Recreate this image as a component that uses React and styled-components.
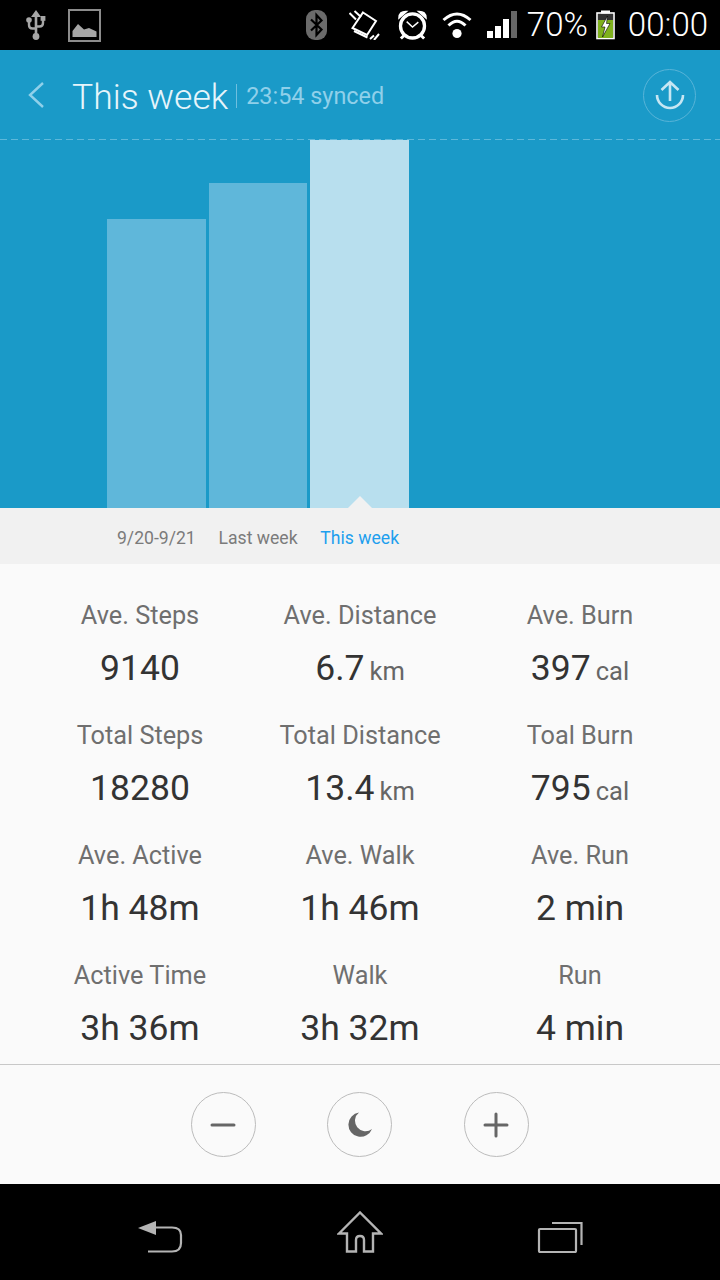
import React from "react";
import styled, { createGlobalStyle } from "styled-components";

const Global = createGlobalStyle`
  html, body { margin: 0; padding: 0; background: #000; }
  body { font-family: Roboto, "Liberation Sans", sans-serif; }
  * { box-sizing: border-box; }
`;

const STATS = [
  ["Ave. Steps", "9140"],
  ["Ave. Distance", "6.7", "km"],
  ["Ave. Burn", "397", "cal"],
  ["Total Steps", "18280"],
  ["Total Distance", "13.4", "km"],
  ["Toal Burn", "795", "cal"],
  ["Ave. Active", "1h 48m"],
  ["Ave. Walk", "1h 46m"],
  ["Ave. Run", "2 min"],
  ["Active Time", "3h 36m"],
  ["Walk", "3h 32m"],
  ["Run", "4 min"],
];

const BARS = [
  { h: 289, label: "9/20-9/21" },
  { h: 325, label: "Last week" },
  { h: 368, label: "This week", active: true },
];

function UsbIcon() {
  return (
    <svg width="20" height="34" viewBox="0 0 20 34" fill="none">
      <path d="M10 2 L15 9 H11.3 V27 H8.7 V9 H5 Z" fill="#a6a6a6" />
      <path d="M3 13 V17 Q3 20.5 6.5 20.5 H10 M17 11 V15 Q17 18.5 13.5 18.5 H10" stroke="#a6a6a6" strokeWidth="2.4" />
      <circle cx="3" cy="12" r="2.8" fill="#a6a6a6" />
      <rect x="14.6" y="8" width="4.8" height="4.8" fill="#a6a6a6" />
      <circle cx="10" cy="28.5" r="3.4" fill="#a6a6a6" />
    </svg>
  );
}

function PictureIcon() {
  return (
    <svg width="33" height="33" viewBox="0 0 33 33" fill="none">
      <rect x="1" y="1" width="31" height="31" stroke="#8c8c8c" strokeWidth="2" />
      <path d="M4.5 28 V22 L10 15 L16 20.5 L21 19 L28.5 22.5 V28 Z" fill="#a6a6a6" />
    </svg>
  );
}

function BluetoothIcon() {
  return (
    <svg width="21" height="30" viewBox="0 0 21 30" fill="none">
      <rect width="21" height="30" rx="9" fill="#6b6b6b" />
      <path d="M5 9.5 L15.5 19.5 L10.5 25 V5 L15.5 10.5 L5 20.5" stroke="#000" strokeWidth="2.2" />
    </svg>
  );
}

function VibrateIcon() {
  return (
    <svg width="31" height="30" viewBox="0 0 31 30" fill="none" stroke="#fff">
      <path d="M14 2.5 L27 11 L18 25 L3.5 18 Z" strokeWidth="2" />
      <path d="M5 21 L18.5 27.5" strokeWidth="2" />
      <path d="M0.5 3 L7 9.5 M5.5 1 L12 7 M21 29 L25 25.5 M25 30 L30 24" strokeWidth="2" />
    </svg>
  );
}

function AlarmIcon() {
  return (
    <svg width="31" height="32" viewBox="0 0 32 32" fill="none" stroke="#fff">
      <circle cx="16" cy="17" r="12.4" strokeWidth="3.4" />
      <path d="M2 9 Q2 1.5 10 2 Z M30 9 Q30 1.5 22 2 Z" fill="#fff" strokeWidth="1.5" />
      <path d="M10 12.5 L16 18 L22 13" strokeWidth="1.5" />
      <path d="M4 30 L7 27 M28 30 L25 27" strokeWidth="3" />
    </svg>
  );
}

function WifiIcon() {
  return (
    <svg width="30" height="30" viewBox="0 0 30 30" fill="none" stroke="#fff" strokeWidth="3">
      <path d="M1.5 10 Q15 -2 28.5 10" />
      <path d="M6.5 15.5 Q15 7 23.5 15.5" />
      <circle cx="15" cy="23.5" r="4.6" fill="#fff" stroke="none" />
    </svg>
  );
}

function SignalIcon() {
  return (
    <svg width="30" height="28" viewBox="0 0 30 28">
      <rect x="0" y="20" width="6" height="7" fill="#fff" />
      <rect x="8" y="15" width="6" height="12" fill="#fff" />
      <rect x="16" y="8" width="6" height="19" fill="#fff" />
      <rect x="24" y="0" width="6" height="27" fill="#666" />
    </svg>
  );
}

function BatteryIcon() {
  return (
    <svg width="19" height="30" viewBox="0 0 19 30" fill="none">
      <rect x="5" y="0.5" width="9" height="3" fill="#fff" />
      <rect x="1" y="3" width="17" height="25.5" stroke="#fff" strokeWidth="1.6" />
      <rect x="2" y="4" width="15" height="6" fill="#333" />
      <rect x="2" y="10" width="15" height="18" fill="#7fb11d" />
      <path d="M11.5 6 L5.5 17 H9 L6.5 27 L14 13.5 H10.5 Z" fill="#fff" stroke="#000" strokeWidth="0.6" />
    </svg>
  );
}

function BackArrow() {
  return (
    <svg width="18" height="28" viewBox="0 0 18 28" fill="none">
      <path d="M16 2 L3 14 L16 26" stroke="#8fd0ea" strokeWidth="2.4" />
    </svg>
  );
}

function UploadIcon() {
  return (
    <svg width="30" height="32" viewBox="0 0 30 32" fill="none" stroke="#c6e6f3" strokeWidth="2.6">
      <path d="M15 22 V3 M6.5 11 L15 3 L23.5 11" />
      <path d="M2 16 A13 13 0 0 0 28 16" />
    </svg>
  );
}

function MinusIcon() {
  return (
    <svg width="26" height="26" viewBox="0 0 26 26" stroke="#666" strokeWidth="3" strokeLinecap="round">
      <path d="M2 13 H24" />
    </svg>
  );
}

function PlusIcon() {
  return (
    <svg width="26" height="26" viewBox="0 0 26 26" stroke="#666" strokeWidth="3" strokeLinecap="round">
      <path d="M2 13 H24 M13 2 V24" />
    </svg>
  );
}

function MoonIcon() {
  return (
    <svg width="26" height="26" viewBox="0 0 26 26">
      <path d="M12 0.5 A12.2 12.2 0 1 0 25 17 A9.5 9.5 0 0 1 12 0.5 Z" fill="#666" />
    </svg>
  );
}

function NavBack() {
  return (
    <svg width="46" height="32" viewBox="0 0 46 32" fill="none">
      <path d="M1 7 L19 0 V14 Z" fill="#b4b4b4" />
      <path d="M18 6.5 H35 Q44 6.5 44 14 V22 Q44 30.5 35 30.5 H11" stroke="#b4b4b4" strokeWidth="2.2" />
    </svg>
  );
}

function NavHome() {
  return (
    <svg width="46" height="42" viewBox="0 0 46 42" fill="none" stroke="#b4b4b4" strokeWidth="2.4">
      <path d="M2 22.5 L23 1.5 L44 22.5 H36 V40.5 H27 V29 Q27 25 23 25 Q19 25 19 29 V40.5 H10 V22.5 Z" />
    </svg>
  );
}

function NavRecent() {
  return (
    <svg width="46" height="31" viewBox="0 0 46 31" fill="none" stroke="#b4b4b4" strokeWidth="2.2">
      <rect x="2" y="7" width="37" height="23" rx="1" />
      <path d="M15 1 H44.5 V23" />
    </svg>
  );
}

export default function App() {
  return (
    <Screen>
      <Global />
      <StatusBar>
        <StatusGroup>
          <StatusSlot $gap={22}><UsbIcon /></StatusSlot>
          <PictureIcon />
        </StatusGroup>
        <StatusGroup>
          <StatusSlot $gap={22}><BluetoothIcon /></StatusSlot>
          <StatusSlot $gap={17}><VibrateIcon /></StatusSlot>
          <StatusSlot $gap={14}><AlarmIcon /></StatusSlot>
          <StatusSlot $gap={15}><WifiIcon /></StatusSlot>
          <StatusSlot $gap={10}><SignalIcon /></StatusSlot>
          <StatusText>70%</StatusText>
          <StatusSlot $gap={13} $left={8}><BatteryIcon /></StatusSlot>
          <StatusText>00:00</StatusText>
        </StatusGroup>
      </StatusBar>

      <Header>
        <BackSlot><BackArrow /></BackSlot>
        <Title>This week</Title>
        <Synced>23:54 synced</Synced>
        <UploadButton><UploadIcon /></UploadButton>
      </Header>

      <Chart>
        {BARS.map((b) => (
          <Bar key={b.label} $h={b.h} $active={b.active} />
        ))}
      </Chart>

      <Tabs>
        {BARS.map((b) => (
          <Tab key={b.label} $active={b.active}>{b.label}</Tab>
        ))}
      </Tabs>

      <StatsGrid>
        {STATS.map(([label, value, unit]) => (
          <Stat key={label}>
            <StatLabel>{label}</StatLabel>
            <StatValue>
              {value}
              {unit && <Unit>{unit}</Unit>}
            </StatValue>
          </Stat>
        ))}
      </StatsGrid>

      <Controls>
        <RoundButton><MinusIcon /></RoundButton>
        <RoundButton><MoonIcon /></RoundButton>
        <RoundButton><PlusIcon /></RoundButton>
      </Controls>

      <NavBar>
        <NavBack />
        <NavHome />
        <NavRecent />
      </NavBar>
    </Screen>
  );
}

const Screen = styled.div`
  width: 720px;
  height: 1280px;
  display: flex;
  flex-direction: column;
  overflow: hidden;
  background: #fafafa;
`;
const StatusBar = styled.div`
  height: 50px;
  background: #000;
  display: flex;
  align-items: center;
  justify-content: space-between;
  padding: 0 12px 0 26px;
`;
const StatusGroup = styled.div`
  display: flex;
  align-items: center;
`;
const StatusSlot = styled.div`
  display: flex;
  margin-right: ${(p) => p.$gap}px;
  margin-left: ${(p) => p.$left || 0}px;
`;
const StatusText = styled.span`
  color: #fff;
  font-size: 33px;
  font-weight: 300;
  line-height: 50px;
`;
const Header = styled.div`
  height: 90px;
  background: #1a9ac8;
  display: flex;
  align-items: center;
  padding: 0 24px 0 27px;
`;
const BackSlot = styled.div`
  width: 45px;
  display: flex;
`;
const Title = styled.div`
  color: #e6f5fb;
  font-size: 35.5px;
  font-weight: 300;
  padding: 3px 8px 0 0;
  line-height: 44px;
`;
const Synced = styled.div`
  color: #8fd0ea;
  font-size: 23.4px;
  line-height: 24px;
  border-left: 1px solid #6fbfdf;
  padding-left: 9px;
  margin-top: 2px;
`;
const UploadButton = styled.div`
  width: 53px;
  height: 53px;
  margin-left: auto;
  border: 1px solid #58b4d8;
  border-radius: 50%;
  display: flex;
  align-items: center;
  justify-content: center;
`;
const Chart = styled.div`
  height: 368px;
  background: #1a9ac8;
  display: flex;
  align-items: flex-end;
  gap: 3px;
  padding-left: 107px;
  position: relative;
  &::before {
    content: "";
    position: absolute;
    top: -1px;
    left: 0;
    right: 0;
    height: 1px;
    background: repeating-linear-gradient(90deg, #5db8da 0 7px, transparent 7px 11px);
  }
`;
const Bar = styled.div`
  width: 98.7px;
  height: ${(p) => p.$h}px;
  background: ${(p) => (p.$active ? "#b8dfee" : "#5fb7da")};
  position: relative;
  ${(p) =>
    p.$active &&
    `&::after {
      content: "";
      position: absolute;
      bottom: 0;
      left: 38px;
      border-left: 12px solid transparent;
      border-right: 12px solid transparent;
      border-bottom: 12px solid #f1f1f1;
    }`}
`;
const Tabs = styled.div`
  height: 56px;
  background: #f1f1f1;
  display: flex;
  align-items: center;
  gap: 3px;
  padding: 4px 0 0 107px;
`;
const Tab = styled.div`
  width: 98.7px;
  text-align: center;
  white-space: nowrap;
  font-size: 17.6px;
  color: ${(p) => (p.$active ? "#1e9fee" : "#7b7b7b")};
`;
const StatsGrid = styled.div`
  height: 501px;
  padding: 30px 30px 0;
  display: grid;
  grid-template-columns: repeat(3, 220px);
  grid-auto-rows: 120px;
  border-bottom: 1px solid #c8c8c8;
`;
const Stat = styled.div`
  display: flex;
  flex-direction: column;
  align-items: center;
`;
const StatLabel = styled.div`
  color: #6f6f6f;
  font-size: 25.3px;
  line-height: 44px;
`;
const StatValue = styled.div`
  color: #333;
  font-size: 35.5px;
  line-height: 48px;
  margin-top: 6px;
`;
const Unit = styled.span`
  color: #666;
  font-size: 25.5px;
  margin-left: 5px;
`;
const Controls = styled.div`
  height: 119px;
  background: #fafafa;
  display: flex;
  align-items: center;
  justify-content: center;
  gap: 71.5px;
  padding-right: 1px;
`;
const RoundButton = styled.div`
  width: 65px;
  height: 65px;
  border: 1px solid #bcbcbc;
  border-radius: 50%;
  display: flex;
  align-items: center;
  justify-content: center;
`;
const NavBar = styled.div`
  flex: 1;
  background: #000;
  display: flex;
  align-items: flex-end;
  justify-content: space-between;
  padding: 0 137px 27px 137px;
`;
